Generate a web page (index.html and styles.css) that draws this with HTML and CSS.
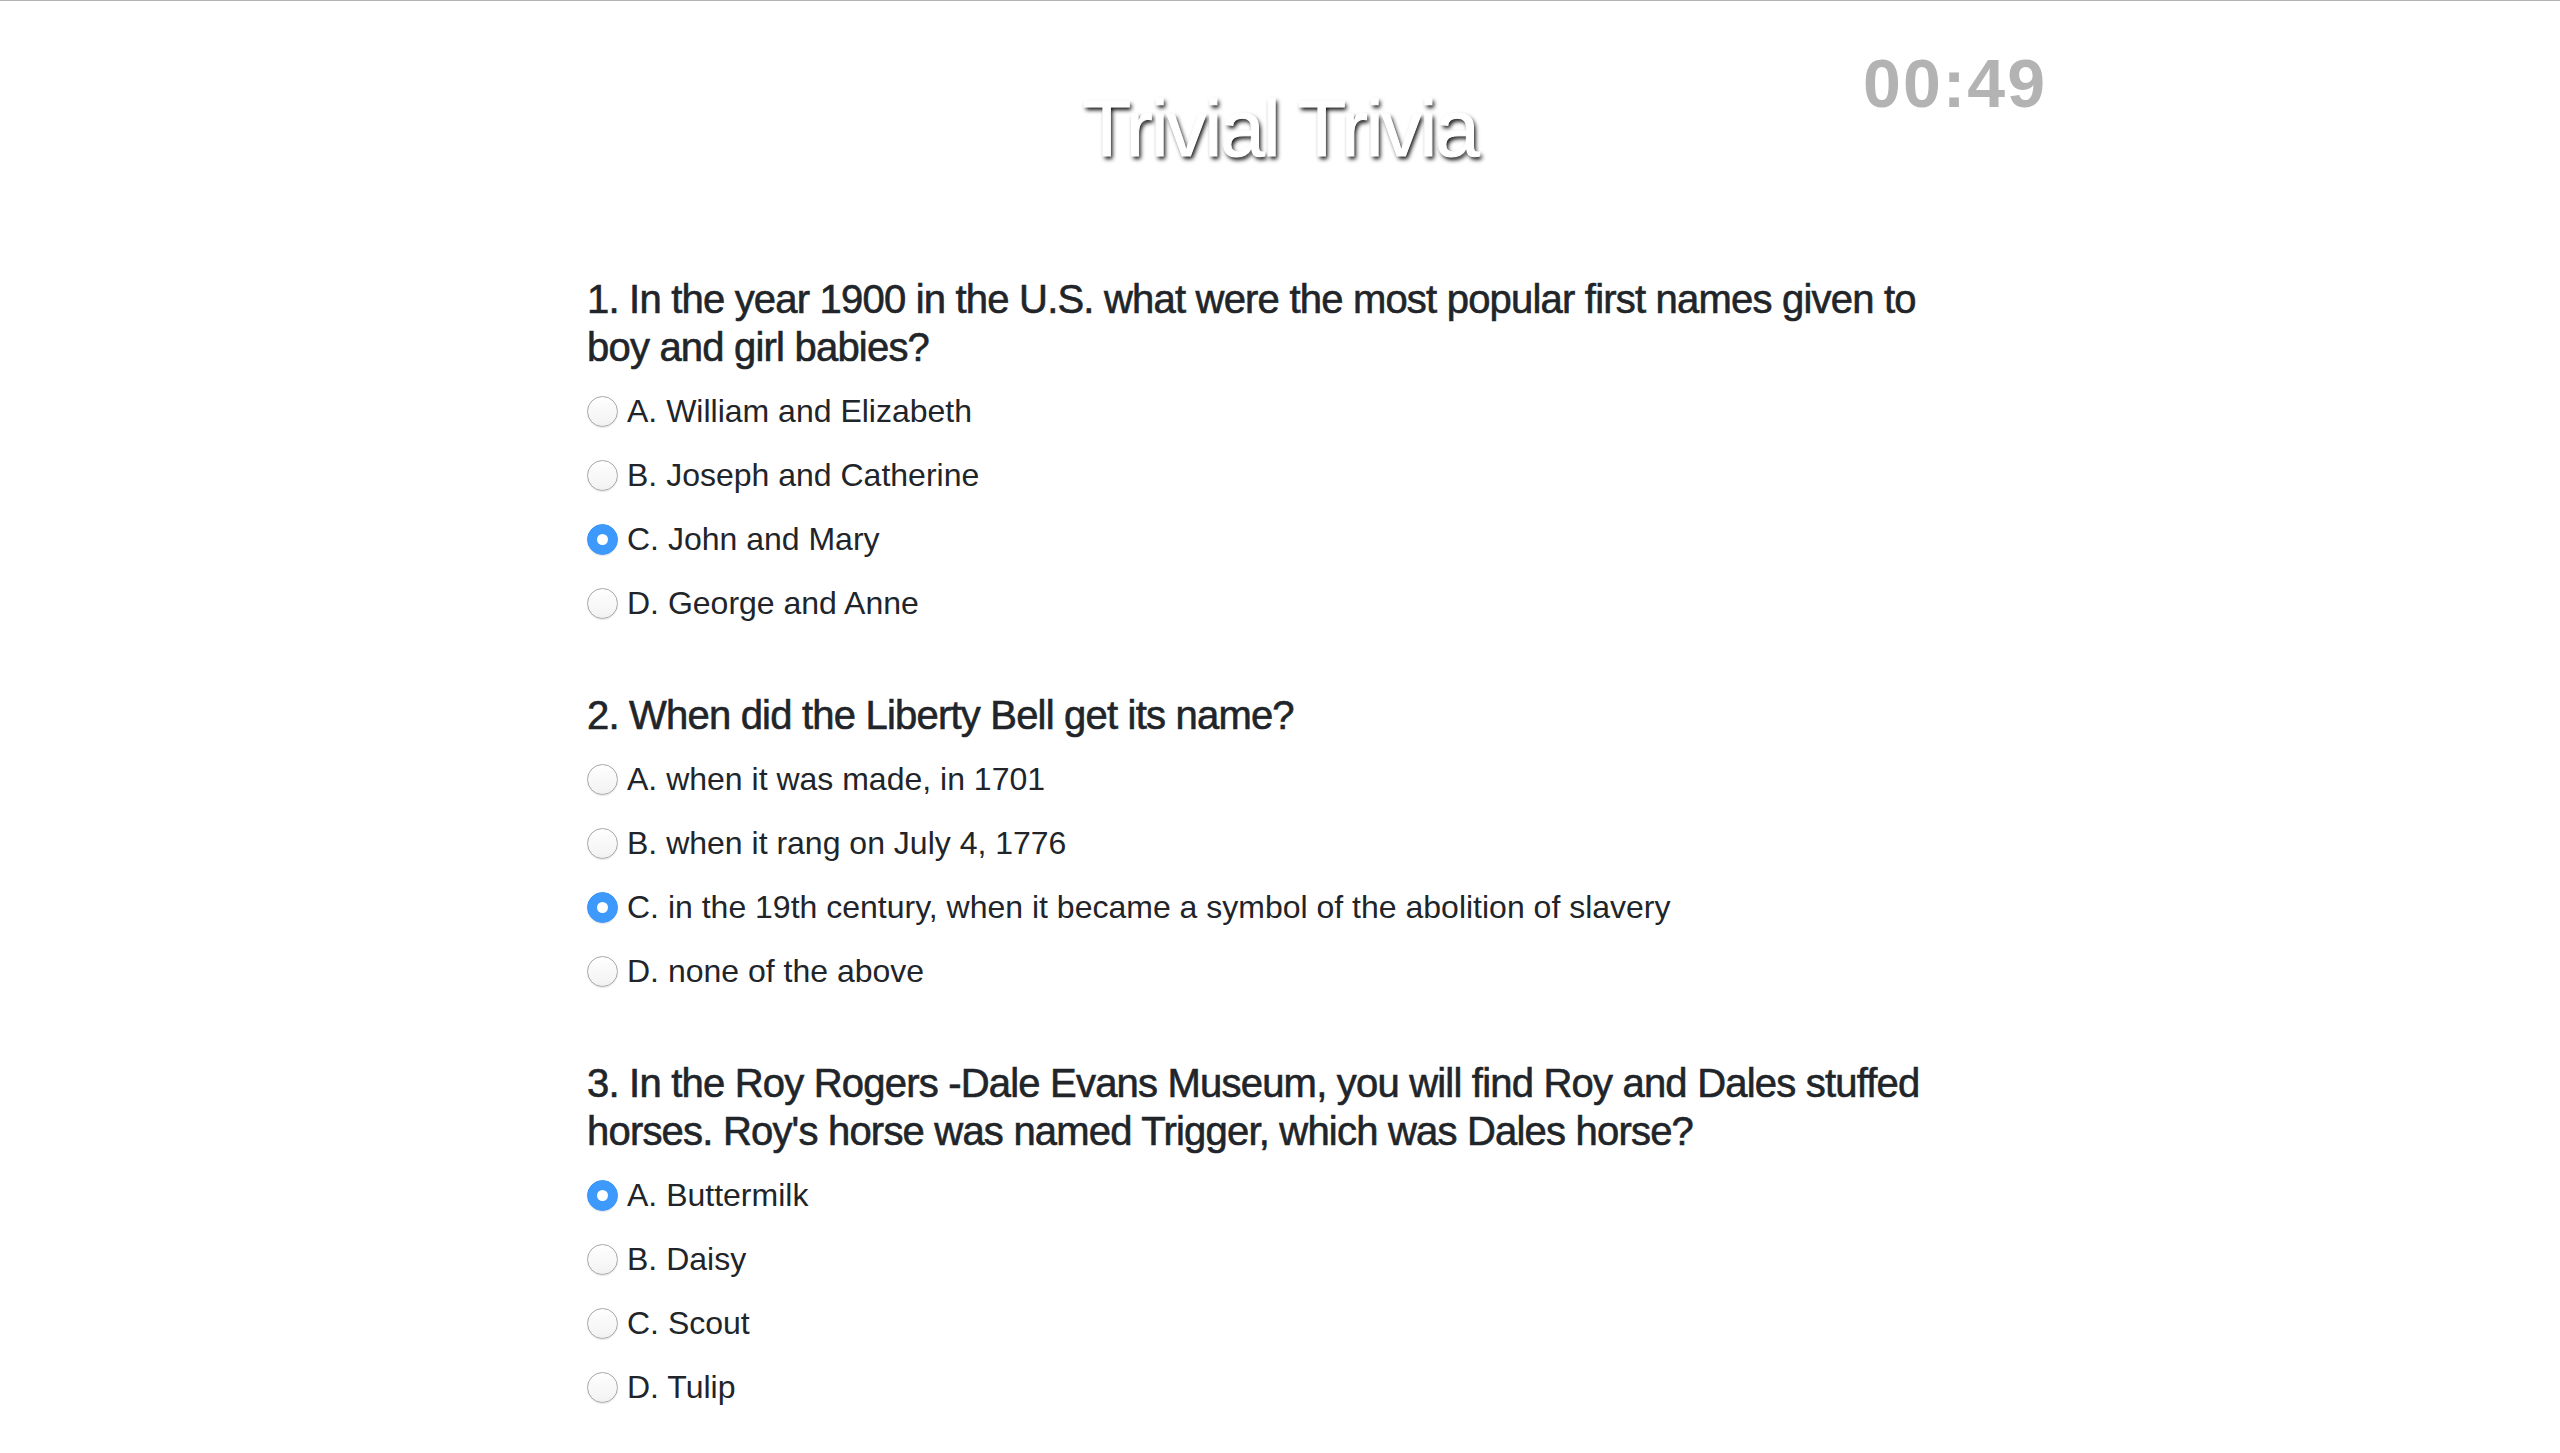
FILE: index.html
```html
<!DOCTYPE html>
<html lang="en">
<head>
<meta charset="utf-8">
<title>Trivial Trivia</title>
<link rel="stylesheet" href="styles.css">
</head>
<body>
<header class="header">
  <div class="spacer"></div>
  <h1 class="title">Trivial Trivia</h1>
  <div class="timer">00:49</div>
</header>
<main class="quiz">
  <section class="group">
    <h5 class="question">1. In the year 1900 in the U.S. what were the most popular first names given to boy and girl babies?</h5>
    <label class="option"><input type="radio" name="q1" class="radio"><span>A. William and Elizabeth</span></label>
    <label class="option"><input type="radio" name="q1" class="radio"><span>B. Joseph and Catherine</span></label>
    <label class="option"><input type="radio" name="q1" class="radio" checked><span>C. John and Mary</span></label>
    <label class="option"><input type="radio" name="q1" class="radio"><span>D. George and Anne</span></label>
  </section>
  <section class="group">
    <h5 class="question">2. When did the Liberty Bell get its name?</h5>
    <label class="option"><input type="radio" name="q2" class="radio"><span>A. when it was made, in 1701</span></label>
    <label class="option"><input type="radio" name="q2" class="radio"><span>B. when it rang on July 4, 1776</span></label>
    <label class="option"><input type="radio" name="q2" class="radio" checked><span>C. in the 19th century, when it became a symbol of the abolition of slavery</span></label>
    <label class="option"><input type="radio" name="q2" class="radio"><span>D. none of the above</span></label>
  </section>
  <section class="group">
    <h5 class="question">3. In the Roy Rogers -Dale Evans Museum, you will find Roy and Dales stuffed horses. Roy's horse was named Trigger, which was Dales horse?</h5>
    <label class="option"><input type="radio" name="q3" class="radio" checked><span>A. Buttermilk</span></label>
    <label class="option"><input type="radio" name="q3" class="radio"><span>B. Daisy</span></label>
    <label class="option"><input type="radio" name="q3" class="radio"><span>C. Scout</span></label>
    <label class="option"><input type="radio" name="q3" class="radio"><span>D. Tulip</span></label>
  </section>
</main>
</body>
</html>
```
FILE: styles.css
```css
* { box-sizing: border-box; }
html, body { margin: 0; padding: 0; background: #fff; }
body {
  border-top: 1px solid #b4b4b4;
  font-family: "Liberation Sans", Arial, sans-serif;
  color: #212529;
  font-size: 32px;
  line-height: 48px;
}
.header {
  display: grid;
  grid-template-columns: 1fr auto 1fr;
  align-items: start;
  padding-top: 48px;
  height: 274px;
}
.title {
  margin: 40px 0 0 0;
  font-size: 80px;
  line-height: 1;
  font-weight: 500;
  letter-spacing: -2px;
  color: #fff;
  -webkit-text-stroke: 1px #fff;
  text-shadow: 2px 3px 4px rgba(0,0,0,0.95);
}
.timer {
  justify-self: end;
  margin-right: 513px;
  font-size: 68px;
  line-height: 1;
  font-weight: 700;
  letter-spacing: 2px;
  color: #b3b3b3;
}
.quiz {
  width: 1386px;
  margin: 0 auto;
}
.group { margin-bottom: 64px; }
.question {
  margin: 0 0 16px 0;
  font-size: 40px;
  line-height: 48px;
  font-weight: 500;
  letter-spacing: -0.8px;
  -webkit-text-stroke: 0.6px #212529;
}
.option {
  display: flex;
  align-items: center;
  height: 48px;
  margin-bottom: 16px;
}
.radio {
  appearance: none;
  -webkit-appearance: none;
  width: 31px;
  height: 31px;
  margin: 0 9px 0 0;
  border-radius: 50%;
  border: 1.5px solid #a8a8a8;
  background: linear-gradient(#ffffff, #f2f2f2);
  box-shadow: 0 1px 1px rgba(0,0,0,0.1);
  flex: none;
  position: relative;
}
.radio:checked {
  border-color: #3b97fb;
  background: #3d99fc;
}
.radio:checked::after {
  content: "";
  position: absolute;
  left: 50%;
  top: 50%;
  width: 11px;
  height: 11px;
  margin: -5.5px 0 0 -5.5px;
  border-radius: 50%;
  background: #fff;
}
```
